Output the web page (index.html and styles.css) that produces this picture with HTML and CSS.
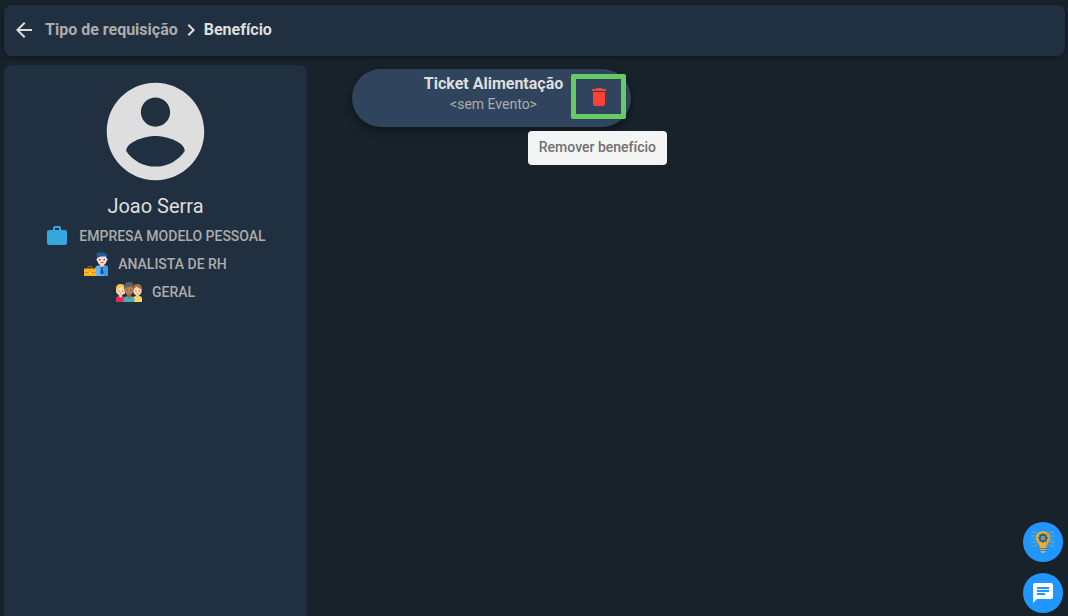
FILE: index.html
```html
<!DOCTYPE html>
<html lang="pt-BR">
<head>
<meta charset="utf-8">
<meta name="viewport" content="width=device-width, initial-scale=1">
<title>Benefício</title>
<link rel="stylesheet" href="styles.css">
</head>
<body>
<div class="app">
  <header class="topbar">
    <button class="icon-button" type="button" aria-label="Voltar">
      <svg width="24" height="24" viewBox="0 0 24 24" fill="currentColor"><path d="M20 11H7.83l5.59-5.59L12 4l-8 8 8 8 1.41-1.41L7.83 13H20v-2z"/></svg>
    </button>
    <nav class="breadcrumb" aria-label="Navegação">
      <a class="crumb" href="#">Tipo de requisição</a>
      <svg class="crumb-arrow" width="26" height="24" viewBox="-1 0 26 24" fill="currentColor"><path d="M10 6 8.59 7.41 13.17 12l-4.58 4.59L10 18l6-6z"/></svg>
      <span class="crumb-current">Benefício</span>
    </nav>
  </header>
  <div class="content">
    <aside class="profile">
      <svg class="avatar" viewBox="0 0 24 24" fill="currentColor"><path d="M12 2C6.48 2 2 6.48 2 12s4.48 10 10 10 10-4.48 10-10S17.52 2 12 2zm0 3c1.66 0 3 1.34 3 3s-1.34 3-3 3-3-1.34-3-3 1.34-3 3-3zm0 14.2c-2.5 0-4.71-1.28-6-3.22.03-1.99 4-3.08 6-3.08 1.99 0 5.97 1.09 6 3.08-1.29 1.94-3.5 3.22-6 3.22z"/></svg>
      <h1 class="name">Joao Serra</h1>
      <ul class="details">
        <li class="detail">
          <svg width="24" height="24" viewBox="0 0 24 24"><path fill="#35a7df" d="M10 2h4a2 2 0 0 1 2 2v2h4a2 2 0 0 1 2 2v11a2 2 0 0 1-2 2H4a2 2 0 0 1-2-2V8a2 2 0 0 1 2-2h4V4a2 2 0 0 1 2-2zm4 4V4h-4v2z"/></svg>
          <span>EMPRESA MODELO PESSOAL</span>
        </li>
        <li class="detail">
          <svg width="24" height="24" viewBox="0 0 24 24">
            <path fill="#5eb5f5" d="M11 24v-7q0-3 3-3.500l3-.5h3l2 .5q2 .5 2 3V24z"/>
            <path fill="#3f99e5" d="M20 13.500 22 14q2 .5 2 3v7h-4z"/>
            <path fill="#f3c6b0" d="M16 11h4v3l-2 1.500-2-1.500z"/>
            <path fill="#ffdccd" d="M13.500 4h9v2q1 .5 1 1.500t-1 1.500q-.5 4-4.500 4.200-4-.2-4.500-4.200-1-.5-1-1.500t1-1.500z"/>
            <path fill="#255a96" d="M12.500 1q2-.8 5-.8 5 0 5.500 3 .4 2-.5 3.300L22 4.500h-5q-2 0-3 1.500-1.500-2-1.500-5z"/>
            <path fill="#37485e" d="M15 7h1.500v1.200H15zM19.500 7H21v1.200h-1.500z"/>
            <path fill="#e65369" d="M16 10h4q-2 2.400-4 0z"/>
            <path fill="#1c5798" d="m16 14.500 2 1 2-1-1 2.500 1 4-2 2-2-2 1-4z"/>
            <path fill="none" stroke="#776d2f" d="M4 17v-2.500h4V17"/>
            <path fill="#ffb319" d="M0 16.500h12V24H0z"/>
            <path fill="#ed8c12" d="M0 20h12v1H0z"/><path fill="#ffe05a" d="M5 20h2v2H5z"/>
          </svg>
          <span>ANALISTA DE RH</span>
        </li>
        <li class="detail">
          <svg width="26" height="20" viewBox="0 0 26 20">
            <path fill="#f5c451" d="M0 11V6.500Q0 2 4.500 2T9 6v6z"/>
            <path fill="#ffd8b4" d="M.8 7q3.200-.5 4.700-2.500L8.500 7v2.500q-.5 4-4 4-3.500 0-3.700-4z"/>
            <path fill="#e32954" d="M0 20v-4q1-2 3-2l1.500 1.500L6 14l3 1v5z"/><path fill="#f4c59f" d="M3 12.500h3v2l-1.500 1.500L3 14.500z"/>
            <path fill="#b06f3e" d="M17 11V6q.5-4 4.500-4T26 6.500V11z"/>
            <path fill="#ffd8b4" d="M17.500 7 21 4.500Q22 6.500 25.200 7v2.500q-.2 4-3.700 4-3.500 0-4-4z"/>
            <path fill="#ffdc49" d="M17 20v-5l3-1 1.500 1.500L23 14q3 0 3 3v3z"/><path fill="#f4c59f" d="M20 12.500h3v2L21.500 16 20 14.500z"/>
            <path fill="#586269" d="M8 7V4.500Q8.500 0 13 0t5 4.500V7z"/>
            <path fill="#b17c58" d="M9 5.500q4 0 6-1.500 1 1.500 2 1.500V7q1 0 1 1t-1 1.200Q16.500 13 13 13T9 9.200Q8 9 8 8t1-1z"/>
            <path fill="#4dabb9" d="M7.500 20v-4l3.500-2 2 2 2-2 3.500 2v4z"/><path fill="#9f6849" d="M11 12.500h4v2L13 16.500l-2-2z"/>
            <path fill="#65483b" d="M2.500 8.500h.8v1h-.8zM6 8.500h.8v1H6zM11 7.500h.8v1H11zM14.500 7.500h.8v1h-.8zM19.500 8.500h.8v1h-.8zM23 8.500h.8v1H23z"/>
            <path stroke="#c26b55" fill="none" stroke-width=".6" d="M3.700 11q1 .8 2 0M12 10.500q1 .8 2 0M20.700 11q1 .8 2 0"/>
          </svg>
          <span>GERAL</span>
        </li>
      </ul>
    </aside>
    <main class="benefits">
      <article class="benefit">
        <div class="benefit-text">
          <h2 class="benefit-title">Ticket Alimentação</h2>
          <p class="benefit-event">&lt;sem Evento&gt;</p>
        </div>
        <button class="remove" type="button" aria-labelledby="remove-tip">
          <svg width="24" height="24" viewBox="0 0 24 24" fill="currentColor"><path d="M6 19c0 1.100.9 2 2 2h8c1.100 0 2-.9 2-2V7H6v12zM19 4h-3.500l-1-1h-5l-1 1H5v2h14V4z"/></svg>
        </button>
        <span class="tooltip" id="remove-tip" role="tooltip">Remover benefício</span>
      </article>
    </main>
  </div>
</div>
<div class="floating">
  <button class="fab" type="button" aria-label="Dicas">
    <svg width="24" height="24" viewBox="0 0 24 24">
      <g fill="none" stroke="#72b4a0" stroke-width="1"><path d="M1 2h3l2 2M0 6h5M2 9h3M0 12h5M1 16h3l2-2M23 2h-3l-2 2M24 6h-5M22 9h-3M24 12h-5M23 16h-3l-2-2"/></g>
      <path fill="#f8ac24" d="M12 1q7 1 7 7 0 3-2 5l-2 4H9l-2-4q-2-2-2-5 0-6 7-7z"/>
      <path fill="#ee9f22" d="M12 1q7 1 7 7 0 3-2 5l-2 4h-2l1-4 3-4q0-5-5-8z"/>
      <circle cx="12" cy="8" r="3" fill="#f8ac24" stroke="#24658c" stroke-width="2"/>
      <circle cx="12" cy="8" r="1.500" fill="#409ee5"/>
      <path stroke="#24658c" stroke-width="1.500" d="M12 3v2M12 11v2M7 8h2M15 8h2M8.500 4.500 10 6M14 10l1.500 1.500M15.500 4.500 14 6M10 10l-1.500 1.500"/>
      <path fill="#b8b486" d="M9 17h6v4l-2 2h-2l-2-2z"/><path stroke="#68777a" d="M9 18.500h6M9 20.500h6"/>
    </svg>
  </button>
  <button class="fab" type="button" aria-label="Conversa">
    <svg width="24" height="24" viewBox="0 0 24 24" fill="currentColor"><path d="M20 2H4c-1.100 0-1.990.9-1.990 2L2 22l4-4h14c1.100 0 2-.9 2-2V4c0-1.100-.9-2-2-2zM6 9h12v2H6V9zm8 5H6v-2h8v2zm4-6H6V6h12v2z"/></svg>
  </button>
</div>
</body>
</html>
```
FILE: styles.css
```css
* { box-sizing: border-box; }

body {
  margin: 0;
  background: #18222b;
  color: #dedede;
  font-family: Roboto, sans-serif;
  font-size: 14px;
}

h1, h2, p, ul { margin: 0; padding: 0; }

button {
  display: flex;
  align-items: center;
  justify-content: center;
  padding: 0;
  border: 0;
  background: none;
  color: inherit;
  cursor: pointer;
}

svg { display: block; flex: none; }

.app {
  display: flex;
  flex-direction: column;
  gap: 9px;
  min-height: 100vh;
  padding: 5px 3px 0 4px;
}

.topbar {
  display: flex;
  align-items: center;
  gap: 9px;
  padding: 13px 8px 14px;
  border-radius: 8px;
  background: #213040;
  box-shadow: 0 1px 4px rgba(0, 0, 0, .4);
}

.breadcrumb {
  display: flex;
  align-items: center;
  font-size: 16px;
  font-weight: 700;
  line-height: 24px;
}

.crumb { color: #acacac; text-decoration: none; }

.content {
  display: flex;
  flex: 1;
  gap: 45px;
}

.profile {
  display: flex;
  flex: 0 0 303px;
  flex-direction: column;
  align-items: center;
  padding-top: 8px;
  border-radius: 8px 8px 0 0;
  background: #213040;
}

.avatar { width: 117px; height: 117px; }

.name {
  margin-top: 2px;
  font-size: 20px;
  font-weight: 400;
  line-height: 28px;
}

.details {
  margin-top: 2px;
  list-style: none;
}

.detail {
  display: flex;
  align-items: center;
  justify-content: center;
  gap: 10px;
  height: 28px;
  color: #acacac;
  font-weight: 500;
}

.benefits {
  flex: 1;
  padding-top: 4px;
}

.benefit {
  position: relative;
  display: flex;
  width: 279px;
  padding: 5px 5px 8px 64px;
  border-radius: 32px;
  background: #30455d;
  box-shadow: 0 3px 8px rgba(0, 0, 0, .45);
}

.benefit-text {
  flex: 1;
  text-align: center;
  white-space: nowrap;
}

.benefit-title {
  font-size: 16px;
  font-weight: 700;
  line-height: 20px;
}

.benefit-event {
  color: #acacac;
  line-height: 20px;
}

.remove {
  width: 55px;
  height: 45px;
  border: 5px solid #65cb62;
  border-radius: 2px;
  color: #ff4034;
}

.tooltip {
  position: absolute;
  top: 62px;
  right: -36px;
  padding: 6px 11px 8px;
  border-radius: 4px;
  background: #f3f5f5;
  color: #707070;
  font-weight: 500;
  line-height: 20px;
  white-space: nowrap;
}

.floating {
  position: fixed;
  right: 5px;
  bottom: 3px;
  display: flex;
  flex-direction: column;
  gap: 11px;
}

.fab {
  width: 40px;
  height: 40px;
  border-radius: 50%;
  background: #2196ff;
  color: #fff;
}
```
